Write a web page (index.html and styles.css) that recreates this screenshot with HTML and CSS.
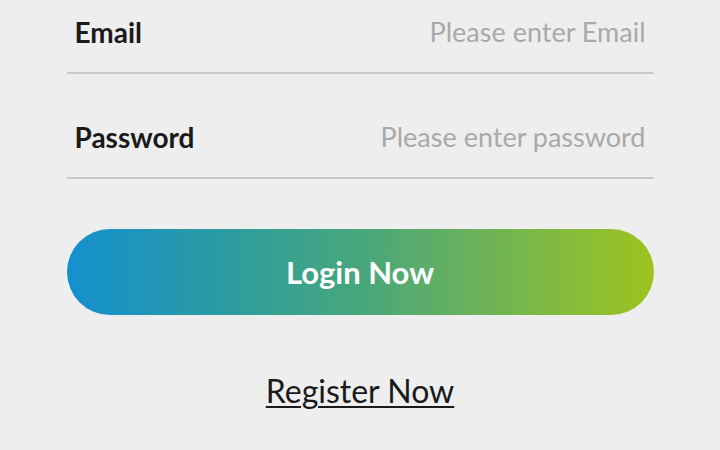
FILE: index.html
```html
<!DOCTYPE html>
<html lang="en">
<head>
<meta charset="utf-8">
<title>Login</title>
<link rel="stylesheet" href="styles.css">
</head>
<body>
<form class="login-form">
  <div class="field">
    <label class="field-label" for="email">Email</label>
    <input class="field-input" id="email" type="email" placeholder="Please enter Email">
  </div>
  <div class="field">
    <label class="field-label" for="password">Password</label>
    <input class="field-input" id="password" type="password" placeholder="Please enter password">
  </div>
  <button class="login-btn" type="button">Login Now</button>
  <a class="register-link" href="#">Register Now</a>
</form>
</body>
</html>
```

FILE: styles.css
```css
* { box-sizing: border-box; }
html, body {
  margin: 0;
  padding: 0;
  background: #eeeeee;
  height: 100%;
  overflow: hidden;
}
body {
  font-family: "Lato", "Open Sans", sans-serif;
}
.login-form {
  width: 587px;
  margin: -31px auto 0;
  display: flex;
  flex-direction: column;
}
.field {
  display: flex;
  align-items: center;
  justify-content: space-between;
  padding: 43px 8px 20px 8px;
  height: 105px;
  border-bottom: 2px solid #c8c8c8;
}
.field-label {
  font-size: 28px;
  font-weight: 700;
  color: #1a1a1a;
  line-height: 40px;
}
.field-input {
  border: none;
  background: transparent;
  outline: none;
  text-align: right;
  font-family: inherit;
  font-size: 27px;
  line-height: 40px;
  color: #333;
  width: 360px;
  padding: 0;
}
.field-input::placeholder {
  color: #a9a9a9;
}
.login-btn {
  margin-top: 50px;
  height: 86px;
  border: none;
  border-radius: 43px;
  background: linear-gradient(to right, #1490cf 0%, #2598ad 20%, #35a093 35%, #48a67c 50%, #6bb25a 70%, #85bb3c 85%, #9cc41f 100%);
  color: #ffffff;
  font-family: inherit;
  font-size: 31px;
  font-weight: 700;
  cursor: pointer;
}
.register-link {
  align-self: center;
  margin-top: 56px;
  font-size: 32px;
  color: #1a1a1a;
  text-decoration: underline;
  text-underline-offset: 3px;
  text-decoration-thickness: 2px;
}
```
